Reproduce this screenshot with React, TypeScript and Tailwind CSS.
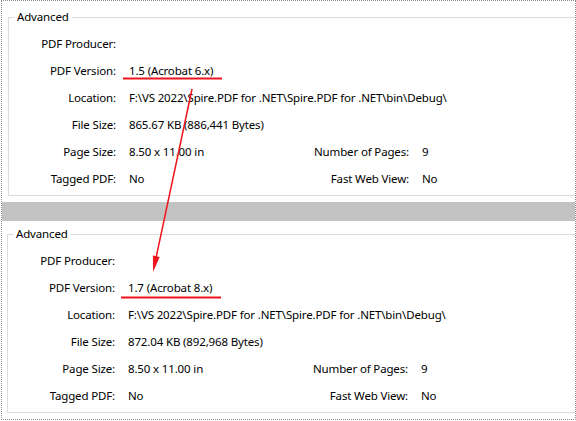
import React from 'react'

type Info = {
  version: string
  size: string
}

const FONT = { fontFamily: '"Noto Sans", "Segoe UI", sans-serif' }

const PATH = 'F:\\VS 2022\\Spire.PDF for .NET\\Spire.PDF for .NET\\bin\\Debug\\'

function Row({ label, value, label2, value2 }: { label: string; value?: string; label2?: string; value2?: string }) {
  return (
    <div className="flex items-center h-[27px] whitespace-nowrap">
      <div className="w-[107px] text-right shrink-0">{label}</div>
      <div className={'ml-[13px] ' + (label2 ? 'w-[180px] shrink-0' : '')}>{value}</div>
      {label2 && (
        <>
          <div className="w-[100px] text-right shrink-0">{label2}</div>
          <div className="ml-[13px]">{value2}</div>
        </>
      )}
    </div>
  )
}

function Group({ info, className }: { info: Info; className: string }) {
  return (
    <fieldset className={'border border-r-0 border-[#dcdcdc] pt-[5px] pb-[3px] ' + className}>
      <legend className="ml-[5px] px-[3px] leading-[16px]">Advanced</legend>
      <Row label="PDF Producer:" />
      <Row label="PDF Version:" value={info.version} />
      <Row label="Location:" value={PATH} />
      <Row label="File Size:" value={info.size} />
      <Row label="Page Size:" value="8.50 x 11.00 in" label2="Number of Pages:" value2="9" />
      <Row label="Tagged PDF:" value="No" label2="Fast Web View:" value2="No" />
    </fieldset>
  )
}

export default function App() {
  return (
    <div className="relative w-[576px] h-[421px] bg-white text-black text-[11.5px] leading-[16px] tracking-[-0.15px]" style={FONT}>
      <div className="ml-[1px] w-[575px] h-[420px] border border-dotted border-[#8c8c8c] flex flex-col">
        <Group info={{ version: '1.5 (Acrobat 6.x)', size: '865.67 KB (886,441 Bytes)' }} className="mt-[8px] ml-[6px]" />
        <div className="mt-[6px] h-[19px] bg-[#c3c3c3]" />
        <Group info={{ version: '1.7 (Acrobat 8.x)', size: '872.04 KB (892,968 Bytes)' }} className="mt-[5px] ml-[5px]" />
      </div>

      {/* red markup drawn over the screenshot */}
      <svg className="absolute inset-0 pointer-events-none" width="576" height="421" viewBox="0 0 576 421">
        <line x1="123" y1="78.5" x2="222" y2="78.5" stroke="#f0141e" strokeWidth="2" />
        <line x1="121" y1="297.5" x2="221" y2="297.5" stroke="#f0141e" strokeWidth="2" />
        <line x1="192" y1="89" x2="156" y2="258" stroke="#f0141e" strokeWidth="1.5" />
        <polygon points="153,272 159.7,257.1 152.9,255.6" fill="#f0141e" />
      </svg>
    </div>
  )
}
